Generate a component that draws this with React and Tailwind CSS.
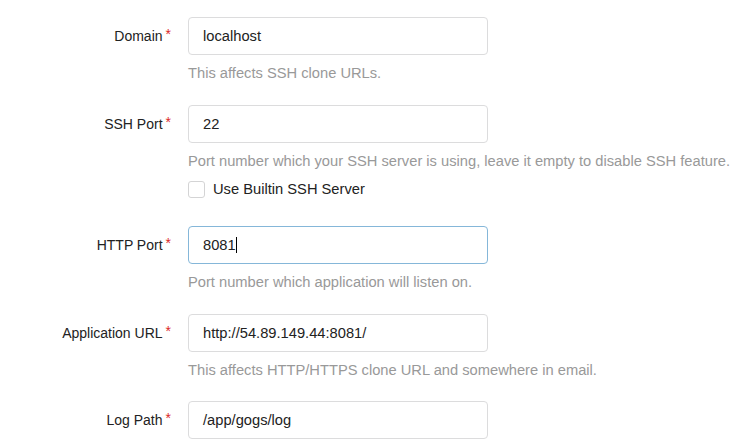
import React from 'react';

const fields = [
  { label: 'Domain', value: 'localhost', help: 'This affects SSH clone URLs.', gap: 'mb-[22px]' },
  {
    label: 'SSH Port',
    value: '22',
    help: 'Port number which your SSH server is using, leave it empty to disable SSH feature.',
    checkbox: 'Use Builtin SSH Server',
    gap: 'mb-[27px]',
  },
  { label: 'HTTP Port', value: '8081', help: 'Port number which application will listen on.', focused: true, gap: 'mb-[22px]' },
  { label: 'Application URL', value: 'http://54.89.149.44:8081/', help: 'This affects HTTP/HTTPS clone URL and somewhere in email.', gap: 'mb-[21px]' },
  { label: 'Log Path', value: '/app/gogs/log', gap: 'mb-[22px]' },
];

const Field = ({ label, value, help, checkbox, focused, gap }) => (
  <div className={gap}>
    <div className="flex items-center">
      <label className="w-[171px] mr-[17px] text-right text-[14px] text-[#222]">
        {label}
        <span className="ml-[3px] text-[#db2828] relative -top-[2px]">*</span>
      </label>
      <div
        className={`w-[300px] h-[38px] flex items-center px-[14px] rounded-[4px] border bg-white text-[14.7px] text-[#222] ${
          focused ? 'border-[#85b7d9]' : 'border-[#dcdcdd]'
        }`}
      >
        <span>{value}</span>
        {focused && <span className="w-px h-[16px] bg-black" />}
      </div>
    </div>
    {help && (
      <p className="ml-[188px] mt-[8px] leading-[20px] text-[14.7px] text-[#999]">{help}</p>
    )}
    {checkbox && (
      <div className="ml-[188px] mt-[8px] flex items-center h-[20px]">
        <span className="w-[17px] h-[17px] rounded-[3px] border border-[#d4d4d5] bg-white" />
        <span className="ml-[8px] text-[14.7px] text-[#222]">{checkbox}</span>
      </div>
    )}
  </div>
);

export default function App() {
  return (
    <div
      className="w-[753px] h-[448px] overflow-hidden bg-white pt-[17px]"
      style={{ fontFamily: '"Liberation Sans", Arial, sans-serif' }}
    >
      {fields.map((f) => (
        <Field key={f.label} {...f} />
      ))}
    </div>
  );
}
